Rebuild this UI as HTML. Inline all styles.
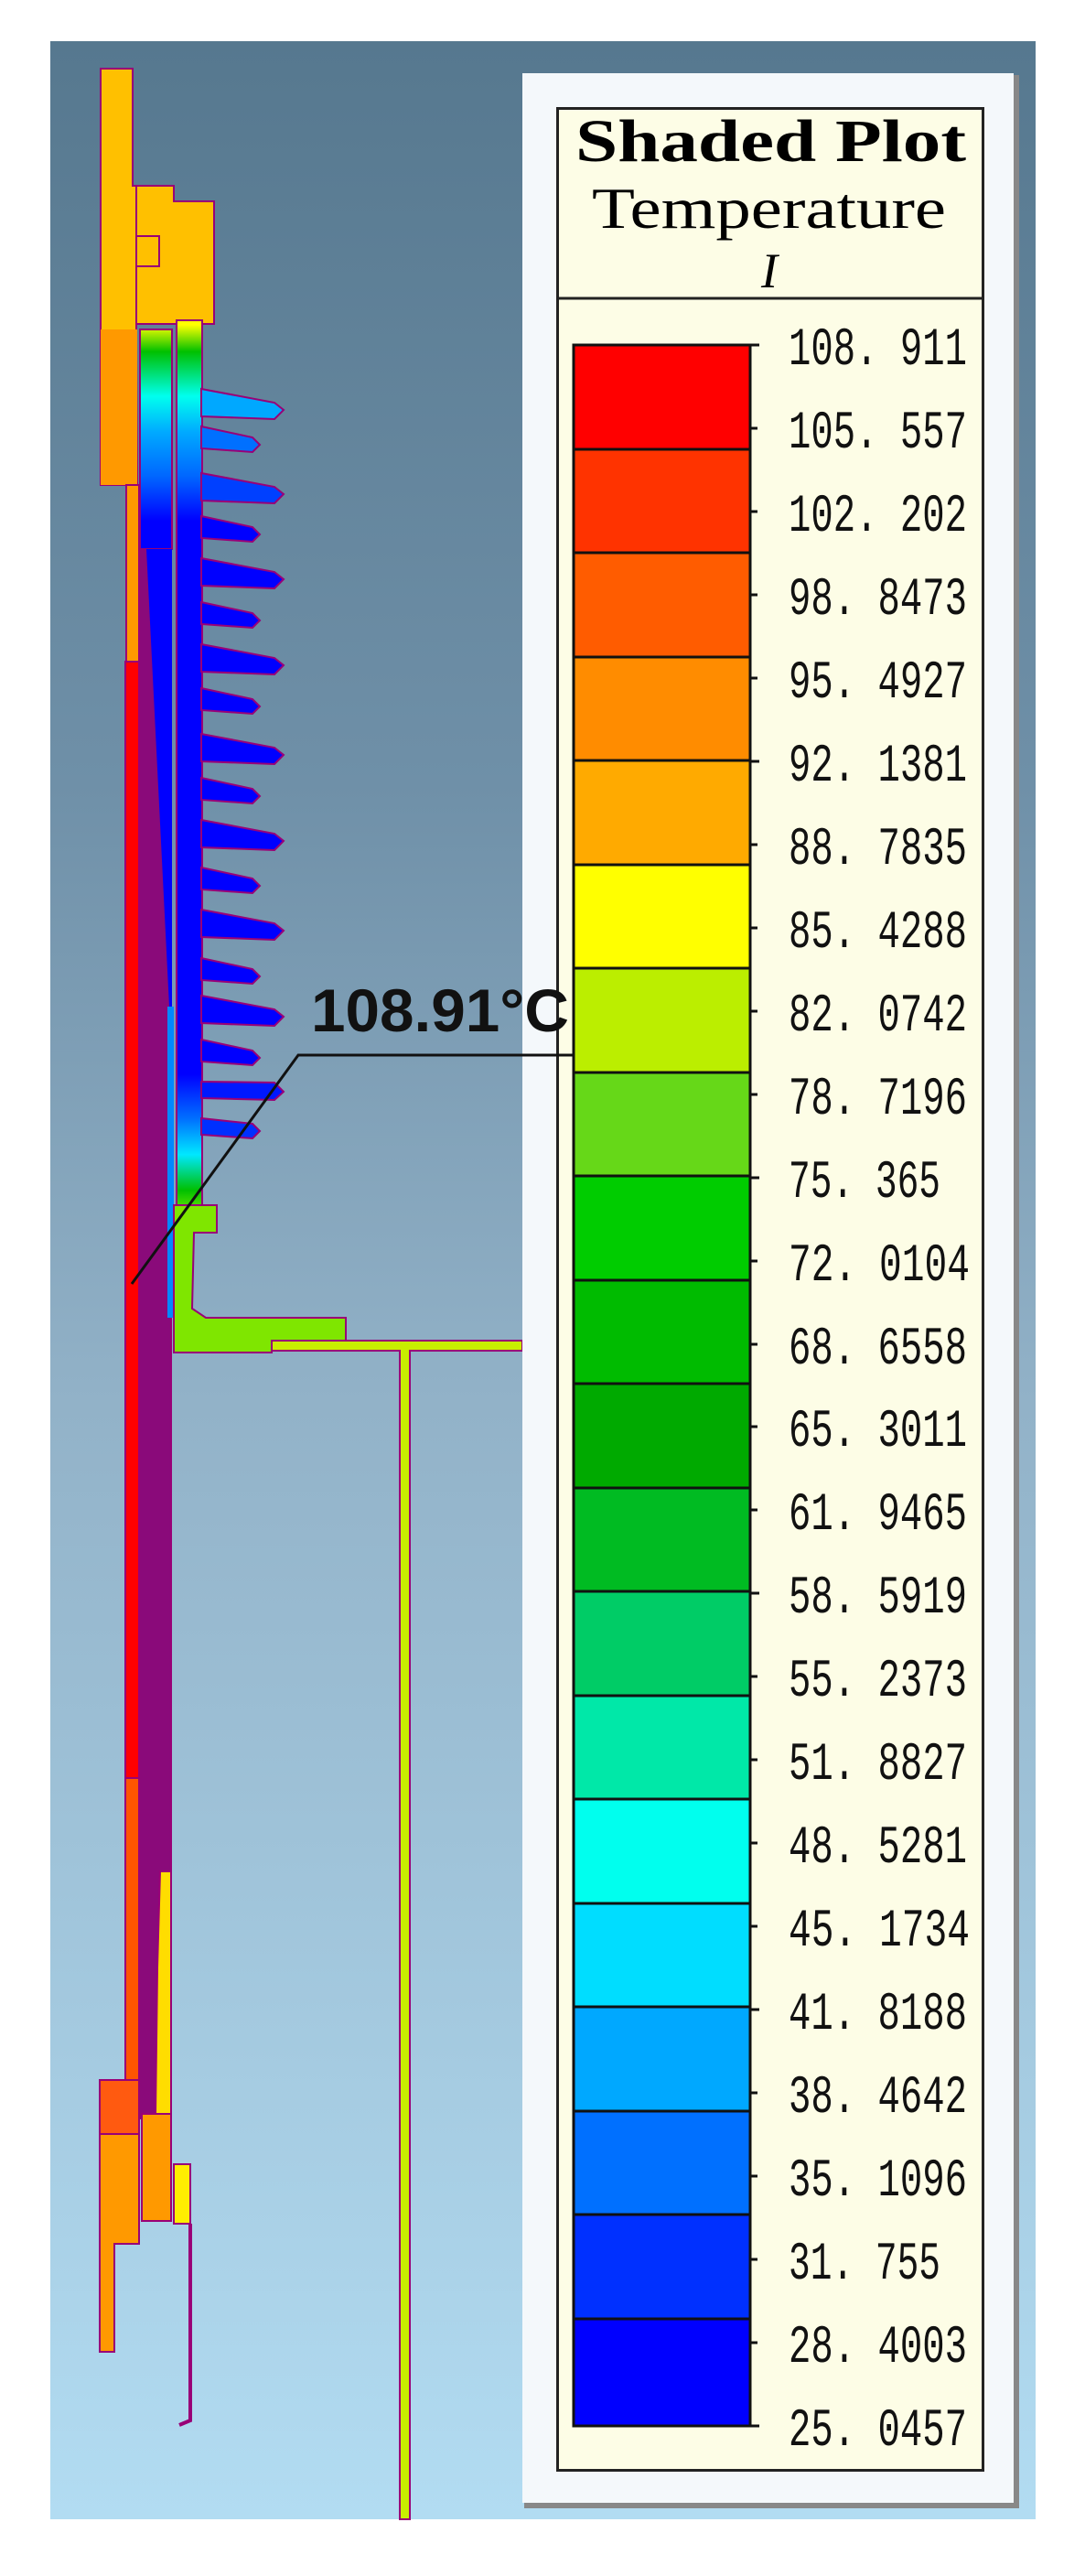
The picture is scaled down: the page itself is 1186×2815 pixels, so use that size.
<!DOCTYPE html>
<html><head><meta charset="utf-8"><style>html,body{margin:0;padding:0;background:#fff}svg{display:block}</style></head>
<body>
<svg width="1186" height="2815" viewBox="0 0 1186 2815" xmlns="http://www.w3.org/2000/svg">
<defs>
<linearGradient id="bg" x1="0" y1="45" x2="0" y2="2753" gradientUnits="userSpaceOnUse">
<stop offset="0" stop-color="#56788f"/><stop offset="0.3" stop-color="#6f90a8"/><stop offset="0.55" stop-color="#92b2c8"/><stop offset="1" stop-color="#b2dcf2"/>
</linearGradient>
<linearGradient id="core" x1="0" y1="355" x2="0" y2="1330" gradientUnits="userSpaceOnUse">
<stop offset="0" stop-color="#ffff00"/><stop offset="0.03" stop-color="#00c000"/><stop offset="0.08" stop-color="#00ffee"/><stop offset="0.12" stop-color="#00aaff"/><stop offset="0.17" stop-color="#0066ff"/><stop offset="0.22" stop-color="#0000ff"/><stop offset="0.84" stop-color="#0000ff"/><stop offset="0.89" stop-color="#0070ff"/><stop offset="0.93" stop-color="#00e8ff"/><stop offset="0.97" stop-color="#00c000"/><stop offset="1" stop-color="#80ee00"/>
</linearGradient>
</defs>
<rect width="1186" height="2815" fill="#fff"/>
<rect x="55" y="45" width="1077" height="2708" fill="url(#bg)"/>

<g stroke="#990077" stroke-width="2">
<polygon points="110,75 145,75 145,203 149,203 149,360 150,530 110,530" fill="#ffc000"/>
<rect x="110" y="360" width="40" height="170" fill="#ff9900" stroke="none"/>
<polygon points="149,203 190,203 190,220 234,220 234,354 149,354" fill="#ffc000"/>
<rect x="149" y="258" width="25" height="33" fill="#ffc000"/>
<rect x="138" y="530" width="14" height="193" fill="#ff9900"/>
<rect x="137" y="723" width="15" height="1220" fill="#ff0000"/>
<rect x="137" y="1943" width="15" height="330" fill="#ff5500"/>
<polygon points="152,540 160,540 187,1100 187,2045 175,2045 175,2315 152,2315" fill="#8a0a7a"/>
<polygon points="175,2045 187,2045 187,2310 170,2310 172,2150" fill="#ffdd00"/>
<rect x="153" y="360" width="35" height="240" fill="url(#core)"/>
<polygon points="160,600 188,600 188,1300 185,1100" fill="#0000ff" stroke="none"/>
<rect x="183" y="1100" width="7" height="340" fill="#0088ff" stroke="none"/>
<rect x="193" y="350" width="28" height="980" fill="url(#core)"/>
</g>
<g stroke="#990077" stroke-width="2">
<polygon points="220,425 300,440 310,448 300,458 220,455" fill="#00a8ff"/>
<polygon points="220,466 276,478 284,486 276,494 220,490" fill="#0070ff"/>
<polygon points="220,517 300,532 310,540 300,550 220,547" fill="#0040ff"/>
<polygon points="220,564 276,576 284,584 276,592 220,588" fill="#0000ff"/>
<polygon points="220,610 300,625 310,633 300,643 220,640" fill="#0000ff"/>
<polygon points="220,658 276,670 284,678 276,686 220,682" fill="#0000ff"/>
<polygon points="220,704 300,719 310,727 300,737 220,734" fill="#0000ff"/>
<polygon points="220,752 276,764 284,772 276,780 220,776" fill="#0000ff"/>
<polygon points="220,802 300,817 310,825 300,835 220,832" fill="#0000ff"/>
<polygon points="220,850 276,862 284,870 276,878 220,874" fill="#0000ff"/>
<polygon points="220,896 300,911 310,919 300,929 220,926" fill="#0000ff"/>
<polygon points="220,948 276,960 284,968 276,976 220,972" fill="#0000ff"/>
<polygon points="220,994 300,1009 310,1017 300,1027 220,1024" fill="#0000ff"/>
<polygon points="220,1047 276,1059 284,1067 276,1075 220,1071" fill="#0000ff"/>
<polygon points="220,1088 300,1103 310,1111 300,1121 220,1118" fill="#0000ff"/>
<polygon points="220,1136 276,1148 284,1156 276,1164 220,1160" fill="#0000ff"/>
<polygon points="220,1182 300,1183 310,1193 300,1202 220,1200" fill="#0018ff"/>
<polygon points="220,1222 276,1228 284,1236 276,1244 220,1240" fill="#0030ff"/>
</g>
<g stroke="#990077" stroke-width="2">
<polygon points="190,1317 237,1317 237,1347 212,1347 210,1430 225,1440 378,1440 378,1465 297,1465 297,1478 190,1478" fill="#7fe600"/>
<polygon points="297,1465 571,1465 571,1476 448,1476 448,2753 437,2753 437,1476 297,1476" fill="#c8ee00"/>
<polygon points="109,2273 152,2273 152,2452 125,2452 125,2570 109,2570" fill="#ff9900"/>
<rect x="109" y="2273" width="43" height="59" fill="#ff5a10"/>
<rect x="155" y="2310" width="32" height="117" fill="#ff9900"/>
<rect x="190" y="2365" width="18" height="65" fill="#ffee00"/>
<polyline points="208,2430 208,2645 196,2650" fill="none" stroke-width="4"/>
</g>

<polyline points="144,1403 326,1153 627,1153" fill="none" stroke="#111" stroke-width="3"/>

<rect x="573" y="82" width="541" height="2659" fill="#888"/>
<rect x="571" y="80" width="537" height="2655" fill="#f4f8fb"/>
<rect x="609.5" y="118.5" width="465" height="2581" fill="#fdfde6" stroke="#222" stroke-width="3"/>
<line x1="609" y1="326" x2="1075" y2="326" stroke="#222" stroke-width="3"/>
<line x1="571" y1="1153" x2="627" y2="1153" stroke="#111" stroke-width="3"/>
<text x="629" y="176" font-family="Liberation Serif, serif" font-weight="bold" font-size="66" fill="#000" textLength="427" lengthAdjust="spacingAndGlyphs">Shaded Plot</text>
<text x="647" y="249" font-family="Liberation Serif, serif" font-size="64" fill="#000" textLength="387" lengthAdjust="spacingAndGlyphs">Temperature</text>
<text x="832" y="314" font-family="Liberation Serif, serif" font-style="italic" font-size="54" fill="#000">I</text>

<g stroke="#111" stroke-width="3">
<rect x="627" y="377" width="193" height="114" fill="#ff0000"/>
<rect x="627" y="491" width="193" height="113" fill="#ff3300"/>
<rect x="627" y="604" width="193" height="114" fill="#ff5c00"/>
<rect x="627" y="718" width="193" height="113" fill="#ff8c00"/>
<rect x="627" y="831" width="193" height="114" fill="#ffaa00"/>
<rect x="627" y="945" width="193" height="113" fill="#ffff00"/>
<rect x="627" y="1058" width="193" height="114" fill="#bbee00"/>
<rect x="627" y="1172" width="193" height="113" fill="#66d818"/>
<rect x="627" y="1285" width="193" height="114" fill="#00cc00"/>
<rect x="627" y="1399" width="193" height="113" fill="#00bb00"/>
<rect x="627" y="1512" width="193" height="114" fill="#00aa00"/>
<rect x="627" y="1626" width="193" height="113" fill="#00bb22"/>
<rect x="627" y="1739" width="193" height="114" fill="#00cc66"/>
<rect x="627" y="1853" width="193" height="113" fill="#00e8a8"/>
<rect x="627" y="1966" width="193" height="114" fill="#00ffee"/>
<rect x="627" y="2080" width="193" height="113" fill="#00ddff"/>
<rect x="627" y="2193" width="193" height="114" fill="#00a8ff"/>
<rect x="627" y="2307" width="193" height="113" fill="#0070ff"/>
<rect x="627" y="2420" width="193" height="114" fill="#0030ff"/>
<rect x="627" y="2534" width="193" height="117" fill="#0000ff"/>
</g>
<g stroke="#111" stroke-width="3">
<line x1="820" y1="377" x2="830" y2="377"/><line x1="820" y1="468" x2="828" y2="468"/><line x1="820" y1="559" x2="828" y2="559"/><line x1="820" y1="650" x2="828" y2="650"/><line x1="820" y1="741" x2="828" y2="741"/><line x1="820" y1="832" x2="830" y2="832"/><line x1="820" y1="923" x2="828" y2="923"/><line x1="820" y1="1014" x2="828" y2="1014"/><line x1="820" y1="1105" x2="828" y2="1105"/><line x1="820" y1="1196" x2="828" y2="1196"/><line x1="820" y1="1287" x2="830" y2="1287"/><line x1="820" y1="1378" x2="828" y2="1378"/><line x1="820" y1="1469" x2="828" y2="1469"/><line x1="820" y1="1559" x2="828" y2="1559"/><line x1="820" y1="1650" x2="828" y2="1650"/><line x1="820" y1="1741" x2="830" y2="1741"/><line x1="820" y1="1832" x2="828" y2="1832"/><line x1="820" y1="1923" x2="828" y2="1923"/><line x1="820" y1="2014" x2="828" y2="2014"/><line x1="820" y1="2105" x2="828" y2="2105"/><line x1="820" y1="2196" x2="830" y2="2196"/><line x1="820" y1="2287" x2="828" y2="2287"/><line x1="820" y1="2378" x2="828" y2="2378"/><line x1="820" y1="2469" x2="828" y2="2469"/><line x1="820" y1="2560" x2="828" y2="2560"/><line x1="820" y1="2651" x2="830" y2="2651"/>
</g>
<g font-family="Liberation Mono, monospace" font-size="58" fill="#111">
<text x="862" y="398" textLength="195" lengthAdjust="spacingAndGlyphs">108. 911</text>
<text x="862" y="489" textLength="195" lengthAdjust="spacingAndGlyphs">105. 557</text>
<text x="862" y="580" textLength="195" lengthAdjust="spacingAndGlyphs">102. 202</text>
<text x="862" y="671" textLength="195" lengthAdjust="spacingAndGlyphs">98. 8473</text>
<text x="862" y="762" textLength="195" lengthAdjust="spacingAndGlyphs">95. 4927</text>
<text x="862" y="853" textLength="195" lengthAdjust="spacingAndGlyphs">92. 1381</text>
<text x="862" y="944" textLength="195" lengthAdjust="spacingAndGlyphs">88. 7835</text>
<text x="862" y="1035" textLength="195" lengthAdjust="spacingAndGlyphs">85. 4288</text>
<text x="862" y="1126" textLength="195" lengthAdjust="spacingAndGlyphs">82. 0742</text>
<text x="862" y="1217" textLength="195" lengthAdjust="spacingAndGlyphs">78. 7196</text>
<text x="862" y="1308" textLength="166" lengthAdjust="spacingAndGlyphs">75. 365</text>
<text x="862" y="1399" textLength="198" lengthAdjust="spacingAndGlyphs">72. 0104</text>
<text x="862" y="1490" textLength="195" lengthAdjust="spacingAndGlyphs">68. 6558</text>
<text x="862" y="1580" textLength="195" lengthAdjust="spacingAndGlyphs">65. 3011</text>
<text x="862" y="1671" textLength="195" lengthAdjust="spacingAndGlyphs">61. 9465</text>
<text x="862" y="1762" textLength="195" lengthAdjust="spacingAndGlyphs">58. 5919</text>
<text x="862" y="1853" textLength="195" lengthAdjust="spacingAndGlyphs">55. 2373</text>
<text x="862" y="1944" textLength="195" lengthAdjust="spacingAndGlyphs">51. 8827</text>
<text x="862" y="2035" textLength="195" lengthAdjust="spacingAndGlyphs">48. 5281</text>
<text x="862" y="2126" textLength="198" lengthAdjust="spacingAndGlyphs">45. 1734</text>
<text x="862" y="2217" textLength="195" lengthAdjust="spacingAndGlyphs">41. 8188</text>
<text x="862" y="2308" textLength="195" lengthAdjust="spacingAndGlyphs">38. 4642</text>
<text x="862" y="2399" textLength="195" lengthAdjust="spacingAndGlyphs">35. 1096</text>
<text x="862" y="2490" textLength="166" lengthAdjust="spacingAndGlyphs">31. 755</text>
<text x="862" y="2581" textLength="195" lengthAdjust="spacingAndGlyphs">28. 4003</text>
<text x="862" y="2672" textLength="195" lengthAdjust="spacingAndGlyphs">25. 0457</text>
</g>

<text x="340" y="1127" font-family="Liberation Sans, sans-serif" font-weight="bold" font-size="66" fill="#111" textLength="282" lengthAdjust="spacingAndGlyphs">108.91°C</text>
</svg>
</body></html>
